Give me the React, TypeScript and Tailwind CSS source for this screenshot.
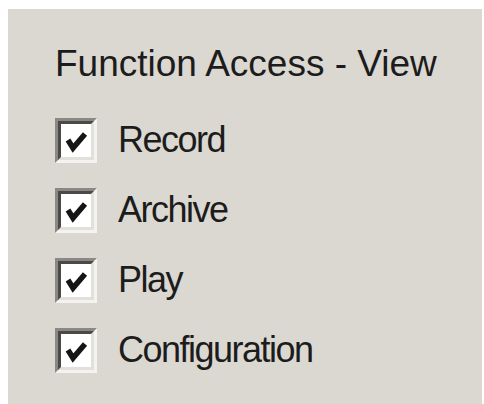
import React from "react";

const functions = ["Record", "Archive", "Play", "Configuration"];

// Classic sunken checkbox, drawn at a large scale
const CheckBox = ({ checked = true }: { checked?: boolean }) => (
  <div className="h-[45px] w-[42px] shrink-0 border-[3px] border-t-[#8a8884] border-l-[#8a8884] border-b-[#f4f3f0] border-r-[#f4f3f0]">
    <div className="h-full w-full border-[3px] border-t-[#4a4946] border-l-[#4a4946] border-b-[#e2e0da] border-r-[#e2e0da] bg-white">
      {checked && (
        <svg viewBox="0 0 30 33" className="h-full w-full">
          <polyline
            points="7,16 12,24 24,10"
            fill="none"
            stroke="#151515"
            strokeWidth="5.5"
            strokeLinecap="butt"
            strokeLinejoin="miter"
          />
        </svg>
      )}
    </div>
  </div>
);

export default function App() {
  return (
    <div className="h-[404px] w-[484px] bg-white pl-[8px] pr-[2px] pt-[9px]">
      <div className="h-full w-full bg-[#dbd8d1] pl-[47px] pt-[36px] font-['Liberation_Sans',Arial,sans-serif] text-[#1c1c1c]">
        <div className="text-[37px] leading-[37px]">Function Access - View</div>
        <div className="mt-[23px] flex flex-col">
          {functions.map((name) => (
            <label key={name} className="flex h-[70px] items-center gap-[21px]">
              <CheckBox />
              <span className="text-[36px] leading-[36px] tracking-[-1.5px]">
                {name}
              </span>
            </label>
          ))}
        </div>
      </div>
    </div>
  );
}
